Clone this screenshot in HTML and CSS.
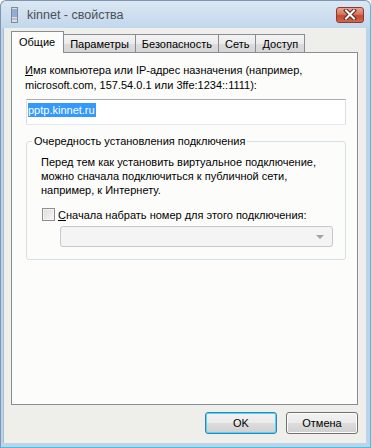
FILE: index.html
```html
<!DOCTYPE html>
<html lang="ru">
<head>
  <meta charset="UTF-8">
  <title>kinnet - свойства</title>
  <link rel="stylesheet" href="styles.css">
</head>
<body>
  <div class="window">
    <div class="titlebar">
      <svg class="app-icon" width="7" height="16" viewBox="0 0 7 16">
        <rect x="0.5" y="0.5" width="6" height="15" fill="#d8dde4" stroke="#7f8a99"/>
        <path d="M1 3h5M1 5h5M1 7h5M1 9h5" stroke="#4f7fc0"/>
        <path d="M1 12h5" stroke="#9aa3ad"/>
      </svg>
      <span class="title">kinnet - свойства</span>
      <button class="close" type="button">
        <svg width="14" height="11" viewBox="0 0 14 11">
          <path d="M3 1.5l8 8M11 1.5l-8 8" stroke="#5a2a22" stroke-width="4" stroke-linecap="square"/>
          <path d="M3 1.5l8 8M11 1.5l-8 8" stroke="#fff" stroke-width="2" stroke-linecap="square"/>
        </svg>
      </button>
    </div>

    <div class="client">
      <div class="tabs">
        <div class="tab active">Общие</div>
        <div class="tab">Параметры</div>
        <div class="tab">Безопасность</div>
        <div class="tab">Сеть</div>
        <div class="tab">Доступ</div>
      </div>

      <div class="panel">
        <p class="label"><u>И</u>мя компьютера или IP-адрес назначения (например,<br>microsoft.com, 157.54.0.1 или 3ffe:1234::1111):</p>
        <div class="textbox"><span class="sel">pptp.kinnet.ru</span></div>

        <fieldset class="group">
          <legend>Очередность установления подключения</legend>
          <p class="note">Перед тем как установить виртуальное подключение,<br>можно сначала подключиться к публичной сети,<br>например, к Интернету.</p>
          <label class="check"><span class="box"></span><span><u>С</u>начала набрать номер для этого подключения:</span></label>
          <div class="combo"><span class="arrow"></span></div>
        </fieldset>
      </div>

      <div class="buttons">
        <button class="btn default" type="button">OK</button>
        <button class="btn" type="button">Отмена</button>
      </div>
    </div>
  </div>
</body>
</html>
```

FILE: styles.css
```css
:root{--border:#898c95;--panel:#fcfcfa;--client:#eeeeea;--text:#000;--font:"Liberation Sans",Arial,sans-serif}
body{margin:0;font-family:var(--font);font-size:11px;color:var(--text)}
.window{width:371px;height:448px;box-sizing:border-box;display:flex;flex-direction:column;padding:0 4px 4px 3px;border:1px solid #7d95b0;border-right-color:#3cc4e0;border-bottom-color:#3cc4e0;border-radius:6px 6px 0 0;background:linear-gradient(#dbe7f3,#c2d7ec 27px,#bcd3ea 28px)}

.titlebar{height:27px;display:flex;align-items:center;flex-shrink:0}
.app-icon{margin-left:7px;display:block}
.title{margin-left:9px;color:#4a4f57;font-size:12.5px}
.close{margin-left:auto;margin-right:2px;width:28px;height:16px;padding:0;display:flex;align-items:center;justify-content:center;border:1px solid #8c3a2f;border-radius:3px;background:linear-gradient(#eaa393,#d9735e 45%,#c34a31 55%,#d0664c)}

.client{flex:1;display:flex;flex-direction:column;padding:4px 8px 9px 7px;background:var(--client);border-left:1px solid #a9bdd2;margin-left:-1px}

.tabs{display:flex;align-items:flex-end;height:21px;margin-bottom:-1px;position:relative;z-index:1}
.tab{height:17px;line-height:18px;padding:0 6px;margin-left:-1px;margin-bottom:1px;border:1px solid var(--border);border-bottom:0;background:linear-gradient(#f3f3f3,#ebebeb 50%,#dcdcdc 50%,#d6d6d6);white-space:nowrap}
.tab.active{height:21px;line-height:21px;margin:0;padding:0 8px 0 7px;background:var(--panel)}

.panel{flex:1;border:1px solid var(--border);background:var(--panel);padding:10px 11px 0 14px}
.label{margin:0 0 6px -1px;line-height:15px;white-space:nowrap}
.textbox{height:21px;border:1px solid #dbdfe6;border-top-color:#abadb3;border-bottom-color:#e3e9ef;background:#fff;padding:3px 1px 0 1px;box-sizing:content-box}
.sel{display:inline-block;height:14px;line-height:14px;background:#3399ff;color:#fff;padding-right:1px}

.group{margin:9px 0 0;padding:0 12px 12px 14px;border:1px solid #d5dfe5;border-radius:3px;min-width:0}
.group legend{padding:0 2px;margin-left:-9px;line-height:15px;color:#000}
.note{margin:6px 0 0;line-height:14px;white-space:nowrap}
.check{display:flex;align-items:center;height:15px;margin-top:10px;white-space:nowrap}
.box{width:11px;height:11px;margin:0 3px 0 1px;border:1px solid #8f8f8f;background:linear-gradient(135deg,#dcdcdc,#f8f8f8);box-shadow:inset 0 0 0 1px #f4f4f4}
.combo{position:relative;height:19px;width:271px;margin:4px 0 0 19px;border:1px solid #c5c8cc;border-radius:3px;background:#f4f4f4}
.arrow{position:absolute;right:8px;top:8px;border:4px solid transparent;border-top:4px solid #a4a4a4;border-bottom:0}

.buttons{display:flex;justify-content:flex-end;gap:9px;margin-top:7px}
.btn{width:72px;height:22px;padding:0;font-family:var(--font);font-size:11px;color:#000;border:1px solid #707070;border-radius:3px;background:linear-gradient(#f2f2f2,#ebebeb 50%,#dddddd 50%,#cfcfcf);box-shadow:inset 0 0 0 1px #fcfcfc}
.btn.default{border-color:#3c7fb1;box-shadow:inset 0 0 0 1px #48d8fb}
```
